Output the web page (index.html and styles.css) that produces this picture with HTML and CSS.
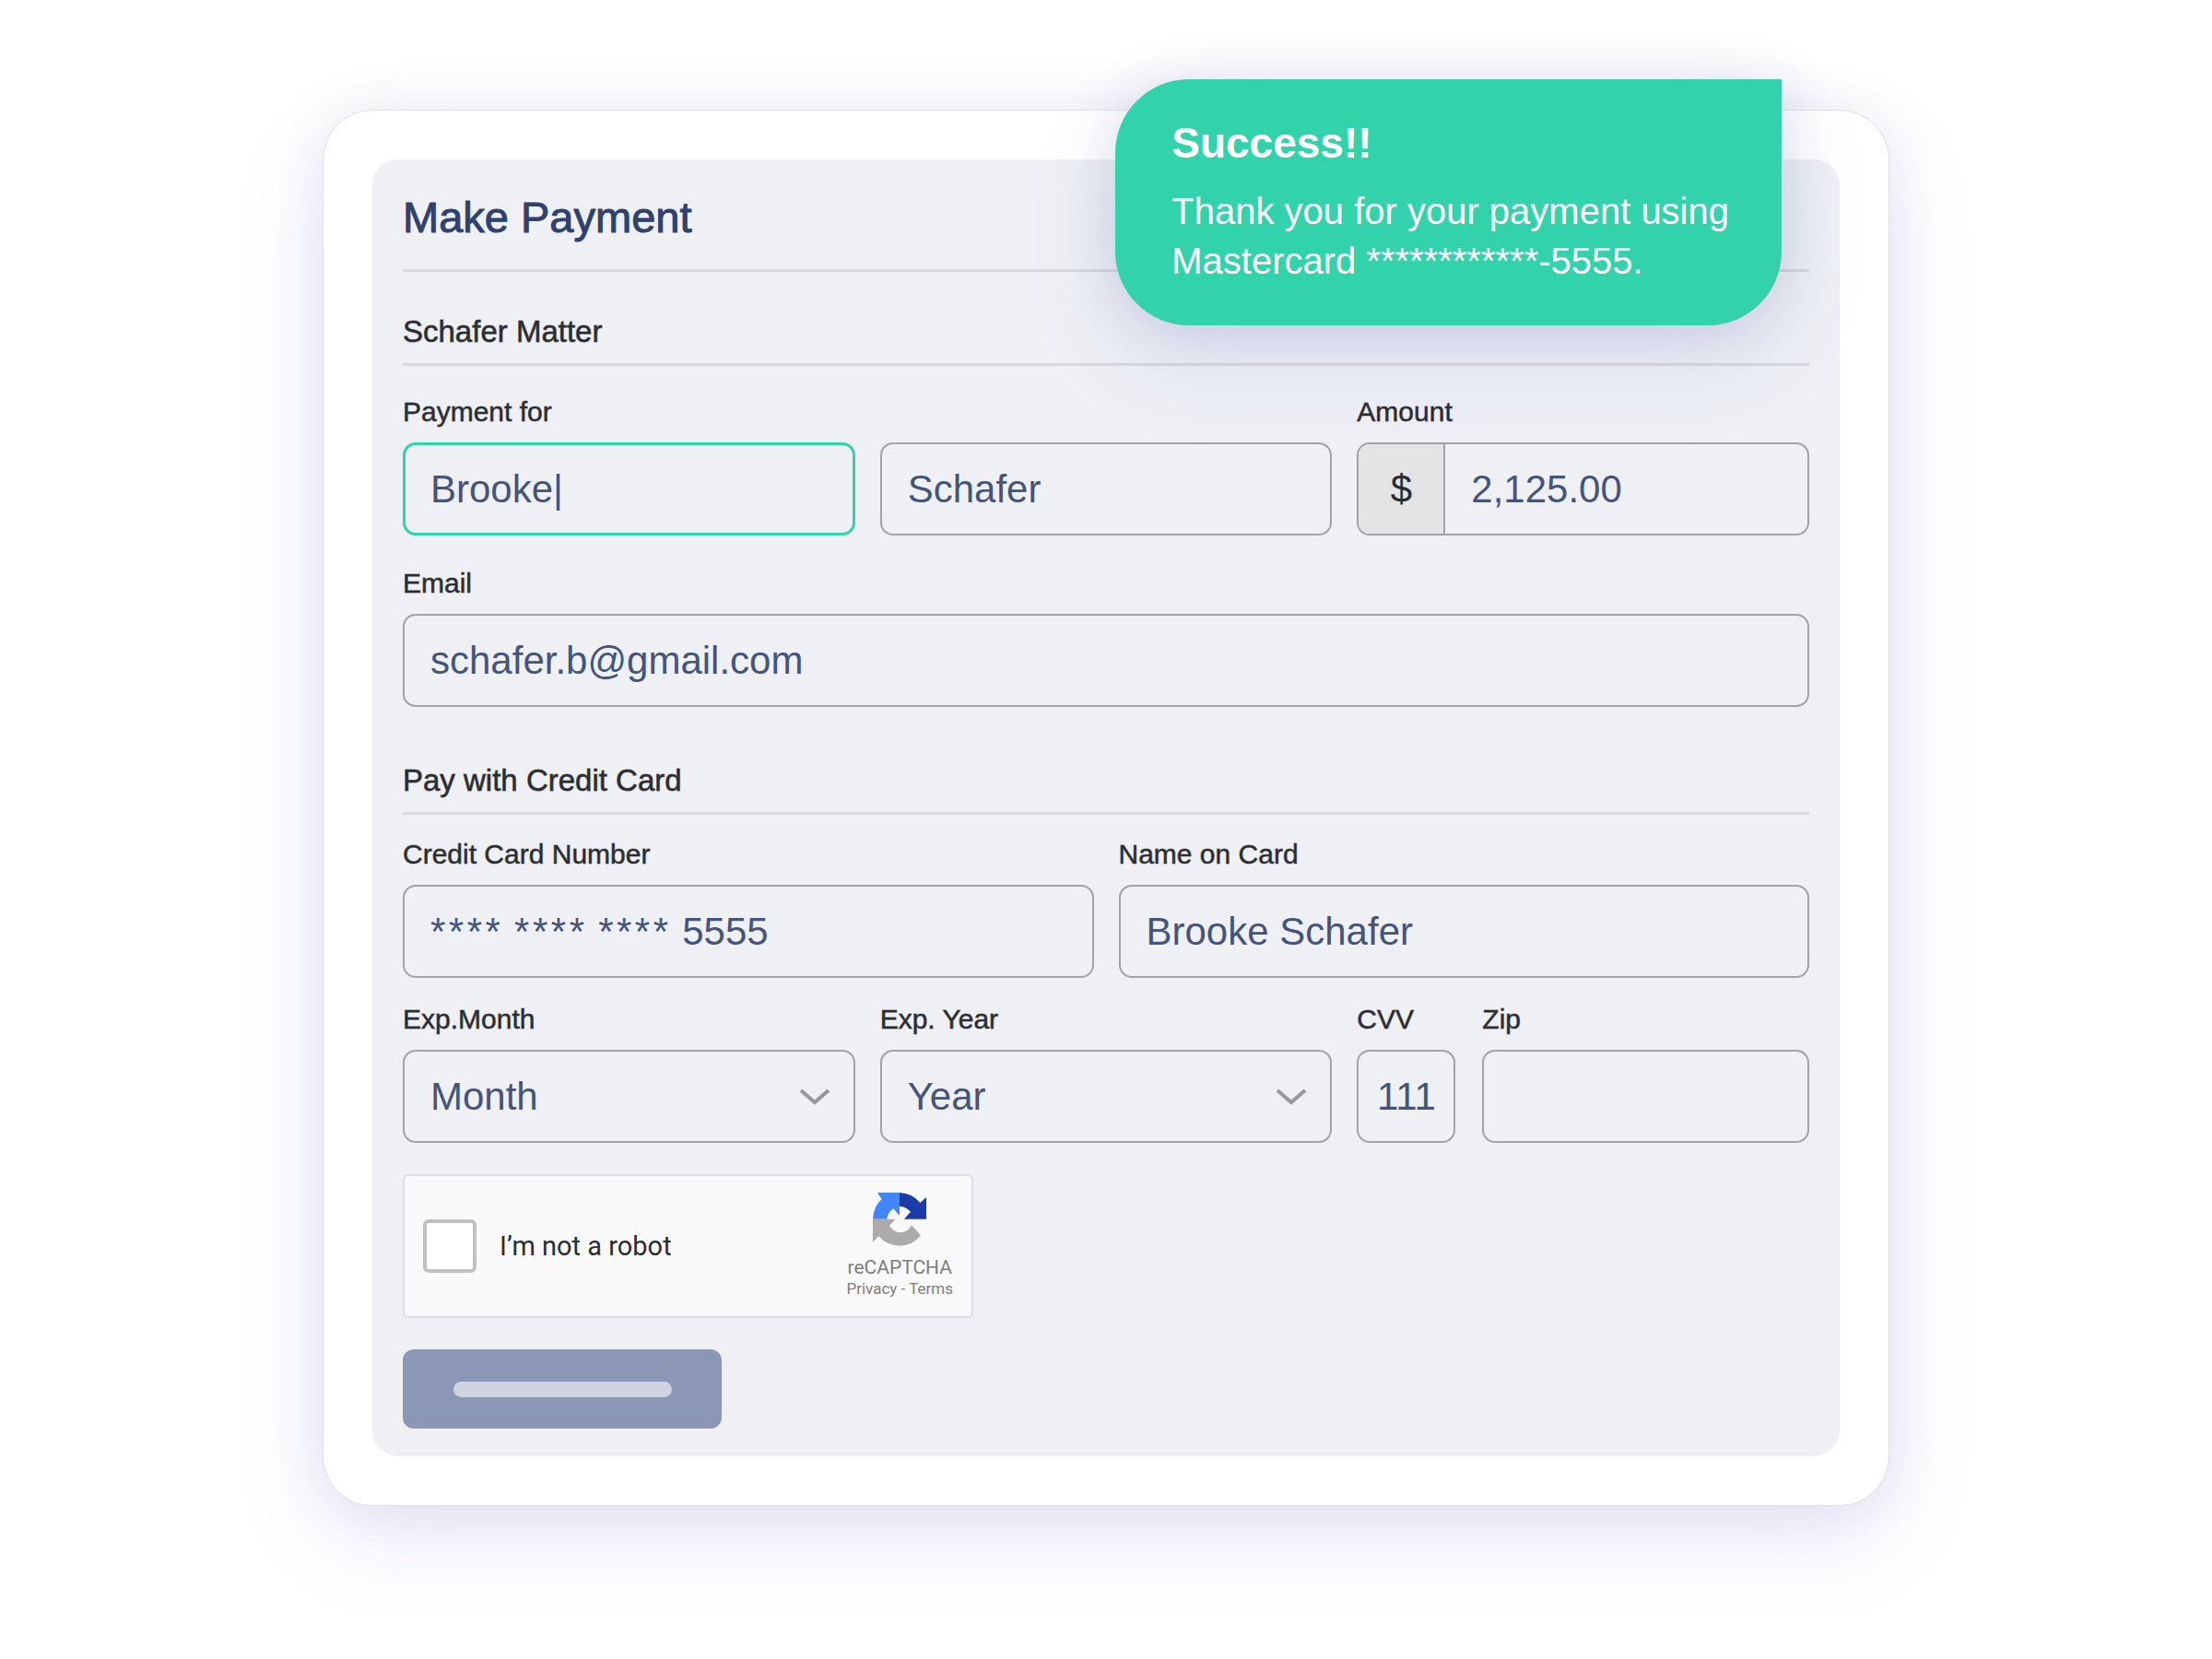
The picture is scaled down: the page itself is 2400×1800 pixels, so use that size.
FILE: index.html
```
<!DOCTYPE html>
<html lang="en">
<head>
	<meta charset="utf-8" />
	<meta name="viewport" content="width=device-width, initial-scale=1" />
	<title>Make Payment</title>
	<link rel="stylesheet" href="styles.css">
</head>
<body>

	<main class="card">

		<form class="panel">
			<h1>Make Payment</h1>

			<h2>Schafer Matter</h2>
			<div class="row thirds matter">
				<div class="field">
					<label for="first-name">Payment for</label>
					<input class="active" type="text" id="first-name" value="Brooke|" />
				</div>
				<div class="field">
					<input type="text" id="last-name" aria-label="Last name" value="Schafer" />
				</div>
				<div class="field">
					<label for="amount">Amount</label>
					<div class="amount">
						<span>$</span>
						<input type="text" id="amount" value="2,125.00" />
					</div>
				</div>
			</div>
			<div class="row email">
				<div class="field">
					<label for="email">Email</label>
					<input type="email" id="email" value="schafer.b@gmail.com" />
				</div>
			</div>

			<h2 class="pay">Pay with Credit Card</h2>
			<div class="row halves number">
				<div class="field">
					<label for="card-number">Credit Card Number</label>
					<input type="text" id="card-number" value="*&hairsp;*&hairsp;*&hairsp;*&hairsp; *&hairsp;*&hairsp;*&hairsp;*&hairsp; *&hairsp;*&hairsp;*&hairsp;*&hairsp; 5555" />
				</div>
				<div class="field">
					<label for="card-name">Name on Card</label>
					<input type="text" id="card-name" value="Brooke Schafer" />
				</div>
			</div>
			<div class="row thirds expiry">
				<div class="field">
					<label for="month">Exp.Month</label>
					<div class="select">
						<select id="month">
							<option>Month</option>
						</select>
						<svg viewBox="0 0 34 18"><path d="M2 2L17 15L32 2" /></svg>
					</div>
				</div>
				<div class="field">
					<label for="year">Exp. Year</label>
					<div class="select">
						<select id="year">
							<option>Year</option>
						</select>
						<svg viewBox="0 0 34 18"><path d="M2 2L17 15L32 2" /></svg>
					</div>
				</div>
				<div class="codes">
					<div class="field">
						<label for="cvv">CVV</label>
						<input class="cvv" type="text" id="cvv" value="111" />
					</div>
					<div class="field">
						<label for="zip">Zip</label>
						<input type="text" id="zip" />
					</div>
				</div>
			</div>

			<div class="captcha">
				<input type="checkbox" id="robot" />
				<label for="robot">I&rsquo;m not a robot</label>
				<div class="brand">
					<svg viewBox="0 0 174 174">
						<path fill="#4285f4" d="M15 0H87V75L67 52Q48 65 46 86H0Q2 45 29 21Z" />
						<path fill="#1c3aa9" d="M87 0Q129 2 154 33L174 15V86H102L123 62Q107 45 87 45Z" />
						<path fill="#ababab" d="M0 86H74L54 107Q67 129 90 130Q115 129 126 106L156 139Q130 173 87 173Q45 172 19 142L0 161Z" />
					</svg>
					<span>reCAPTCHA</span>
					<small><a href="#">Privacy</a> - <a href="#">Terms</a></small>
				</div>
			</div>

			<button type="submit" aria-label="Pay"><span></span></button>
		</form>

		<div class="toast" role="status">
			<strong>Success!!</strong>
			<p>Thank you for your payment using<br>Mastercard ************-5555.</p>
		</div>

	</main>

</body>
</html>
```
FILE: styles.css
```
* {
	box-sizing: border-box;
	margin: 0;
	font-family: 'Liberation Sans', Arial, sans-serif;
}

body {
	padding: 119px 24px;
	background: #FFFFFF;
	color: #2B2C30;
}


/*Card*/
.card {
	position: relative;
	max-width: 1700px;
	margin: 0 auto;
	padding: 53px;
	border: 1px solid #DFE0EA;
	border-radius: 54px;
	background: #FFFFFF;
	box-shadow: 0 36px 100px rgba(80, 80, 220, 0.12), 0 4px 60px rgba(40, 40, 90, 0.08);
}

.panel {
	padding: 35px 33px 30px;
	border-radius: 28px;
	background: #EEF0F4;
}

h1 {
	padding-bottom: 28px;
	border-bottom: 3px solid #D9DADE;
	font-size: 47px;
	line-height: 56px;
	font-weight: 400;
	color: #2F416C;
	-webkit-text-stroke: 1px #2F416C;
}

h2 {
	margin-top: 45px;
	padding-bottom: 14px;
	border-bottom: 3px solid #D9DADE;
	font-size: 33px;
	line-height: 40px;
	font-weight: 400;
	-webkit-text-stroke: 1px rgba(43, 44, 48, 0.6);
}
h2.pay {
	margin-top: 60px;
}


/*Fields*/
.row {
	display: grid;
	gap: 27px;
	align-items: end;
}
.thirds {
	grid-template-columns: repeat(3, 1fr);
}
.halves {
	grid-template-columns: repeat(2, 1fr);
}
.matter {
	margin-top: 32px;
}
.email {
	margin-top: 34px;
}
.number {
	margin-top: 25px;
}
.expiry {
	margin-top: 27px;
}

.field {
	display: flex;
	flex-direction: column;
	gap: 15px;
	min-width: 0;
}
.field label {
	font-size: 30px;
	line-height: 36px;
	-webkit-text-stroke: 1px rgba(43, 44, 48, 0.5);
}
.field input,
.field select {
	width: 100%;
	height: 101px;
	padding: 0 28px;
	border: 2px solid #A2A2A7;
	border-radius: 14px;
	background: transparent;
	font-size: 42px;
	color: #44547B;
	outline: none;
}
.field input.active {
	border: 3px solid #31D3AA;
	padding: 0 27px;
}
.field input.cvv {
	padding: 0;
	text-align: center;
}

.amount {
	display: flex;
	height: 101px;
	border: 2px solid #A2A2A7;
	border-radius: 14px;
	overflow: hidden;
}
.amount span {
	flex: 0 0 94px;
	display: flex;
	align-items: center;
	justify-content: center;
	border-right: 2px solid #A2A2A7;
	background: #E4E4E6;
	font-size: 42px;
}
.field .amount input {
	height: 100%;
	border: 0;
	border-radius: 0;
}

.select {
	display: grid;
	align-items: center;
}
.select select {
	grid-area: 1 / 1;
	appearance: none;
}
.select svg {
	grid-area: 1 / 1;
	justify-self: end;
	width: 34px;
	margin-right: 27px;
	fill: none;
	stroke: #98989C;
	stroke-width: 4;
	pointer-events: none;
}

.codes {
	display: grid;
	grid-template-columns: 107px 1fr;
	gap: 29px;
}


/*Captcha*/
.captcha {
	display: flex;
	align-items: center;
	max-width: 619px;
	height: 156px;
	margin-top: 34px;
	padding: 0 20px;
	border: 2px solid #DCDDE2;
	border-radius: 6px;
	background: #F9F9F9;
}
.captcha input {
	appearance: none;
	width: 58px;
	height: 58px;
	border: 4px solid #C1C1C1;
	border-radius: 6px;
	background: #FFFFFF;
}
.captcha label {
	margin-left: 25px;
	font-family: Roboto, sans-serif;
	font-size: 29px;
}
.brand {
	display: flex;
	flex-direction: column;
	align-items: center;
	margin-left: auto;
	color: #7D7D7D;
}
.brand svg {
	width: 58px;
	height: 58px;
	margin-bottom: 12px;
}
.brand span,
.brand small,
.brand a {
	font-family: Roboto, sans-serif;
	line-height: 23px;
	color: inherit;
	text-decoration: none;
}
.brand span {
	font-size: 21px;
}
.brand small,
.brand a {
	font-size: 17px;
}


button {
	display: flex;
	align-items: center;
	justify-content: center;
	width: 346px;
	height: 86px;
	margin-top: 34px;
	border: 0;
	border-radius: 12px;
	background: #8C96B5;
}
button span {
	width: 237px;
	height: 17px;
	border-radius: 9px;
	background: #D0D4E1;
}


/*Toast*/
.toast {
	position: absolute;
	top: -34px;
	right: 116px;
	padding: 42px 57px 43px 61px;
	border-radius: 80px 0 80px 80px;
	background: #32D3AB;
	box-shadow: 0 36px 100px rgba(80, 80, 220, 0.12), 0 4px 60px rgba(40, 40, 90, 0.12);
	color: #FFFFFF;
}
.toast strong {
	display: block;
	font-size: 46px;
	line-height: 54px;
}
.toast p {
	margin-top: 20px;
	font-size: 40px;
	line-height: 54px;
}
```
